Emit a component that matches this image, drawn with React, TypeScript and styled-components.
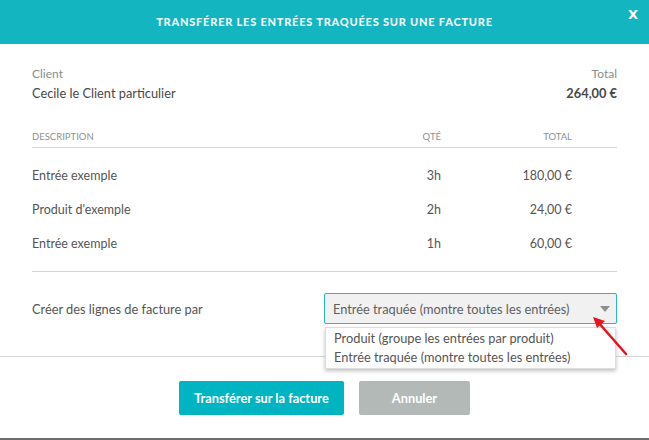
import React from "react";
import styled, { createGlobalStyle } from "styled-components";

const Global = createGlobalStyle`
  html, body { margin: 0; padding: 0; background: #fff; }
  body { font-family: Lato, "Noto Sans", sans-serif; }
  * { box-sizing: border-box; }
`;

const Modal = styled.div`
  width: 649px;
  height: 440px;
  background: #fff;
  border-bottom: 2px solid #6d6d6d;
  display: flex;
  flex-direction: column;
  position: relative;
  overflow: hidden;
`;

const Header = styled.div`
  height: 44px;
  background: #13b5c0;
  display: flex;
  align-items: center;
  justify-content: center;
  position: relative;
`;

const Title = styled.div`
  color: #eef7f7;
  font-family: Lato, sans-serif;
  font-weight: 900;
  font-size: 11px;
  letter-spacing: 0.78px;
  text-transform: uppercase;
  margin-top: -2px;
`;

const Close = styled.div`
  position: absolute;
  right: 11px;
  top: 7px;
  color: #fff;
  font-family: "DejaVu Sans", sans-serif;
  font-weight: 700;
  font-size: 13px;
`;

const Body = styled.div`
  padding: 21px 32px 0 32px;
  display: flex;
  flex-direction: column;
`;

const Summary = styled.div`
  display: flex;
  justify-content: space-between;
`;

const SummaryCol = styled.div<{ $right?: boolean }>`
  display: flex;
  flex-direction: column;
  align-items: ${(p) => (p.$right ? "flex-end" : "flex-start")};
`;

const Label = styled.div`
  font-size: 12px;
  line-height: 18px;
  color: #8c8c8c;
`;

const Value = styled.div<{ $bold?: boolean }>`
  font-size: 12.8px;
  line-height: 21px;
  color: #484848;
  font-weight: ${(p) => (p.$bold ? 700 : 400)};
`;

const Table = styled.div`
  margin-top: 22px;
  display: flex;
  flex-direction: column;
`;

const Row = styled.div<{ $head?: boolean }>`
  display: grid;
  grid-template-columns: 1fr 60px 131px 45px;
  align-items: center;
  height: ${(p) => (p.$head ? "22px" : "34px")};
  border-bottom: ${(p) => (p.$head ? "1px solid #d4d6d6" : "none")};
  font-size: ${(p) => (p.$head ? "9.5px" : "12.5px")};
  color: ${(p) => (p.$head ? "#8e9192" : "#555")};
  text-transform: ${(p) => (p.$head ? "uppercase" : "none")};
`;

const Rows = styled.div`
  padding: 10px 0 11px;
  border-bottom: 1px solid #d4d6d6;
`;

const Cell = styled.div<{ $right?: boolean }>`
  text-align: ${(p) => (p.$right ? "right" : "left")};
  white-space: nowrap;
`;

const Option = styled.div`
  display: flex;
  align-items: center;
  justify-content: space-between;
  padding: 21px 0 32px;
  position: relative;
`;

const OptionLabel = styled.div`
  font-size: 12.8px;
  color: #555;
`;

const Select = styled.div`
  width: 293px;
  height: 31px;
  border: 1px solid #28b7c1;
  border-radius: 2px;
  background: #f1f1f1;
  display: flex;
  align-items: center;
  justify-content: space-between;
  padding: 0 6px 0 8px;
  font-size: 12.8px;
  color: #5f5f5f;
`;

const Caret = styled.div`
  width: 0;
  height: 0;
  border-left: 5px solid transparent;
  border-right: 5px solid transparent;
  border-top: 6px solid #8f8f8f;
`;

const Menu = styled.div`
  position: absolute;
  top: 55px;
  right: 1px;
  width: 291px;
  background: #fff;
  border: 1px solid #ddd;
  box-shadow: 0 2px 4px rgba(0, 0, 0, 0.25);
  padding: 1px 0;
  z-index: 2;
`;

const MenuItem = styled.div`
  font-size: 12.8px;
  color: #555;
  line-height: 19px;
  padding: 0 8px;
`;

const Footer = styled.div`
  border-top: 1px solid #d4d6d6;
  display: flex;
  justify-content: center;
  gap: 15px;
  padding-top: 24px;
`;

const Button = styled.button<{ $primary?: boolean }>`
  height: 34px;
  width: ${(p) => (p.$primary ? "165px" : "111px")};
  border: none;
  border-radius: 2px;
  background: ${(p) => (p.$primary ? "#00b5c1" : "#b2b9b7")};
  color: #fff;
  font-family: Lato, sans-serif;
  font-weight: 700;
  font-size: 12.8px;
  cursor: pointer;
`;

const Arrow = styled.svg`
  position: absolute;
  left: 588px;
  top: 312px;
  z-index: 3;
`;

const rows = [
  { d: "Entrée exemple", q: "3h", t: "180,00 €" },
  { d: "Produit d'exemple", q: "2h", t: "24,00 €" },
  { d: "Entrée exemple", q: "1h", t: "60,00 €" },
];

export default function App() {
  return (
    <>
      <Global />
      <Modal>
        <Header>
          <Title>Transférer les entrées traquées sur une facture</Title>
          <Close>X</Close>
        </Header>
        <Body>
          <Summary>
            <SummaryCol>
              <Label>Client</Label>
              <Value>Cecile le Client particulier</Value>
            </SummaryCol>
            <SummaryCol $right>
              <Label>Total</Label>
              <Value $bold>264,00 €</Value>
            </SummaryCol>
          </Summary>
          <Table>
            <Row $head>
              <Cell>Description</Cell>
              <Cell $right>Qté</Cell>
              <Cell $right>Total</Cell>
              <Cell />
            </Row>
            <Rows>
              {rows.map((r, i) => (
                <Row key={i}>
                  <Cell>{r.d}</Cell>
                  <Cell $right>{r.q}</Cell>
                  <Cell $right>{r.t}</Cell>
                  <Cell />
                </Row>
              ))}
            </Rows>
          </Table>
          <Option>
            <OptionLabel>Créer des lignes de facture par</OptionLabel>
            <Select>
              <span>Entrée traquée (montre toutes les entrées)</span>
              <Caret />
            </Select>
            <Menu>
              <MenuItem>Produit (groupe les entrées par produit)</MenuItem>
              <MenuItem>Entrée traquée (montre toutes les entrées)</MenuItem>
            </Menu>
          </Option>
        </Body>
        <Footer>
          <Button $primary>Transférer sur la facture</Button>
          <Button>Annuler</Button>
        </Footer>
        <Arrow width="44" height="46" viewBox="0 0 44 46">
          <line x1="38" y1="42" x2="10" y2="10" stroke="#e8141b" strokeWidth="2.5" strokeLinecap="round" />
          <polygon points="5,5 17,9 9,16" fill="#e8141b" />
        </Arrow>
      </Modal>
    </>
  );
}
